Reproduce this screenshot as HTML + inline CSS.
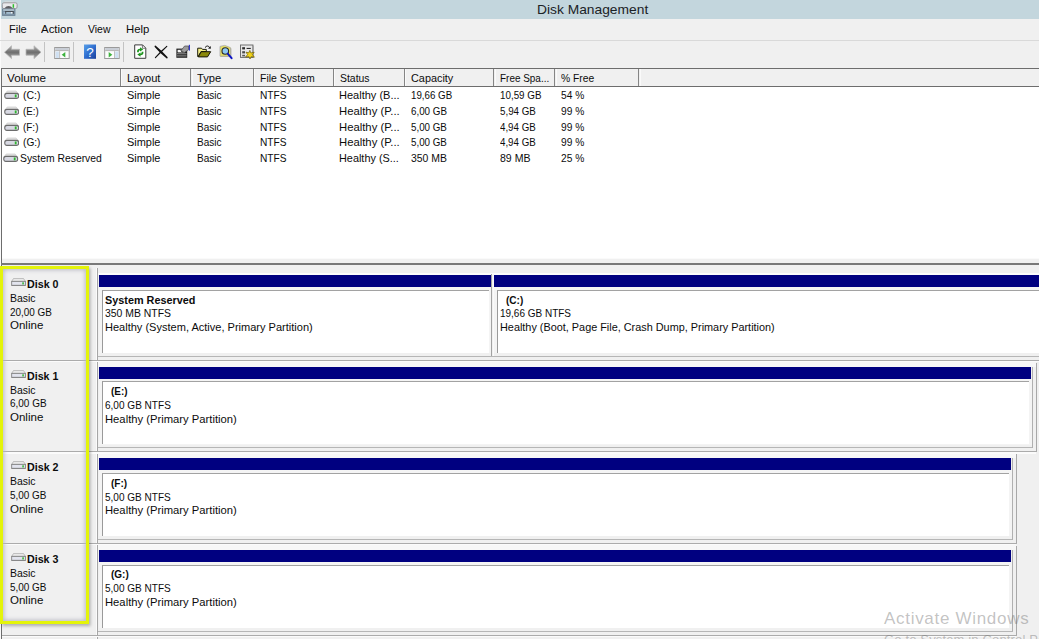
<!DOCTYPE html>
<html><head><meta charset="utf-8"><title>Disk Management</title>
<style>
html,body{margin:0;padding:0;}
body{width:1039px;height:639px;overflow:hidden;background:#f0f0f0;position:relative;font-family:"Liberation Sans","DejaVu Sans",sans-serif;font-size:11px;color:#0c0c0c;}
.a{position:absolute;}
#title{left:0;top:0;width:1039px;height:19px;background:#c3d6dd;}
#list{left:1px;top:68px;width:1038px;height:190px;background:#fff;border-left:1px solid #6d6d6d;border-top:1px solid #6d6d6d;box-sizing:border-box;}
#hdr{position:absolute;left:0;top:0;width:1038px;height:16.5px;background:#f0f0f0;border-bottom:1.2px solid #6d6d6d;}
.hc{position:absolute;top:0;height:16px;border-right:1px solid #8a8a8a;box-sizing:border-box;}
.t{position:absolute;white-space:nowrap;font-size:11.5px;line-height:12px;height:12px;transform-origin:0 0;}
.b{font-weight:bold;}
.bar{position:absolute;background:#000080;}
.w{position:absolute;background:#fff;}
.l{position:absolute;}
</style></head><body>
<div id="title" class="a"></div>
<div class="a" style="left:0;top:0;width:1px;height:19px;background:#f6f9fa"></div>
<div class="a" style="left:0;top:19px;width:1px;height:620px;background:#fafafa"></div>
<div class="a" style="left:0;top:40px;width:1039px;height:1px;background:#d9d9d9"></div>

<svg class="a" style="left:0;top:41px" width="270" height="27" viewBox="0 41 270 27"><defs><linearGradient id="ga" x1="0" y1="0" x2="0" y2="1"><stop offset="0" stop-color="#b4b4b4"/><stop offset=".5" stop-color="#6f6f6f"/><stop offset="1" stop-color="#a8a8a8"/></linearGradient><linearGradient id="gh" x1="0" y1="0" x2="1" y2="1"><stop offset="0" stop-color="#5aa0e8"/><stop offset=".5" stop-color="#2f6fd0"/><stop offset="1" stop-color="#1c3f9a"/></linearGradient></defs><path d="M4.5 52.2 L11.5 45.8 L11.5 49.3 L19.5 49.3 L19.5 55.2 L11.5 55.2 L11.5 58.6 Z" fill="url(#ga)" stroke="#b5b5b5" stroke-width=".8"/><path d="M41 52.2 L34 45.8 L34 49.3 L26 49.3 L26 55.2 L34 55.2 L34 58.6 Z" fill="url(#ga)" stroke="#b5b5b5" stroke-width=".8"/><rect x="44.0" y="42" width="1" height="20" fill="#c3c3c3"/><rect x="73.0" y="42" width="1" height="20" fill="#c3c3c3"/><rect x="123.0" y="42" width="1" height="20" fill="#c3c3c3"/><rect x="54.7" y="47.5" width="14.5" height="11" fill="#fdfdfd" stroke="#9a9a9a" stroke-width="1"/><rect x="55.2" y="48" width="13.5" height="2" fill="#c9ced6"/><rect x="55.2" y="50.2" width="13.5" height=".9" fill="#a8a8a8"/><rect x="55.7" y="51.5" width="3.2" height="6.5" fill="#cfe0f2"/><rect x="59.300000000000004" y="51.2" width=".8" height="7" fill="#b0b0b0"/><path d="M61.7 54.8 L65.3 52 L65.3 57.6 Z" fill="#3db33d"/><rect x="84" y="44.5" width="12" height="14.3" fill="url(#gh)"/><text x="90" y="56.6" font-family="Liberation Sans,sans-serif" font-weight="normal" font-size="13.5" fill="#fff" text-anchor="middle">?</text><rect x="104.7" y="47.5" width="14.5" height="11" fill="#fdfdfd" stroke="#9a9a9a" stroke-width="1"/><rect x="105.2" y="48" width="13.5" height="2" fill="#c9ced6"/><rect x="105.2" y="50.2" width="13.5" height=".9" fill="#a8a8a8"/><rect x="115.10000000000001" y="51.5" width="3.2" height="6.5" fill="#cfe0f2"/><rect x="114.0" y="51.2" width=".8" height="7" fill="#b0b0b0"/><path d="M112.3 54.8 L108.7 52 L108.7 57.6 Z" fill="#3db33d"/><path d="M134.7 44.9 L142.6 44.9 L145.8 48.1 L145.8 58.3 L134.7 58.3 Z" fill="#fff" stroke="#3c3c3c" stroke-width="1"/><path d="M142.4 45 L142.4 48.3 L145.7 48.3" fill="none" stroke="#555" stroke-width=".8"/><path d="M137.1 52.2 Q136.6 49 140 48.7 L140 47.2 L143.2 49.4 L140 51.6 L140 50.3 Q138.6 50.4 138.8 52.2 Z" fill="#1f951f"/><path d="M143.4 51.8 Q143.9 55 140.5 55.3 L140.5 56.8 L137.3 54.6 L140.5 52.4 L140.5 53.7 Q141.9 53.6 141.7 51.8 Z" fill="#1f951f"/><path d="M155.3 46.4 Q161 51 166.9 57.6 Q160.5 52.6 155.3 46.4 Z" fill="#111" stroke="#111" stroke-width="1.5" stroke-linejoin="round"/><path d="M166.8 46.4 Q161.5 51.5 155.4 57.6 Q161.5 50.6 166.8 46.4 Z" fill="#111" stroke="#111" stroke-width="1.1" stroke-linejoin="round"/><rect x="176.4" y="48.6" width="10.8" height="9.2" fill="#1c1c1c"/><rect x="177.6" y="49.8" width="7" height="2.6" fill="#f4f4f4"/><rect x="177" y="53.2" width="9.6" height="1" fill="#8c8c8c"/><rect x="177" y="54.8" width="9.6" height="1" fill="#7a7a7a"/><rect x="177" y="56.3" width="9.6" height=".9" fill="#666"/><path d="M181 50.6 L184.6 46 L188.6 46 L188.6 49.6 L184.6 52.6 Z" fill="#9c9c9c" stroke="#4a4a4a" stroke-width=".7"/><path d="M181 50.6 L182.6 52.4" stroke="#222" stroke-width="1"/><rect x="188.8" y="44.8" width="1.1" height="5.8" fill="#1a22c8"/><path d="M197.7 48.2 L201.5 48.2 L202.5 49.4 L206.3 49.4 L206.3 51.5 L201 51.5 L198.2 56.5 L197.7 56.5 Z" fill="#f4ee88" stroke="#1e1e0c" stroke-width="1"/><path d="M198.3 56.9 L201.2 51.7 L210.7 51.7 L207.5 56.9 Z" fill="#8a8808" stroke="#15150a" stroke-width="1"/><path d="M205 47.6 Q207.5 44.4 209.8 47.6" fill="none" stroke="#111" stroke-width="1"/><path d="M208 48.4 L210.8 48.8 L210.6 46" fill="#111"/><path d="M220.6 47.2 L225 46 L229.2 47.6 L231.4 48.6 L231.4 57 L220.6 57 Z" fill="#b4b4b4"/><path d="M220 46.4 L224.6 45.4 L228.6 46.8 L230.6 47.8 L230.6 56.2 L220 56.2 Z" fill="#e6df62" stroke="#a8a8a8" stroke-width=".8"/><circle cx="225.3" cy="51" r="3.3" fill="#8cc8f4" stroke="#2a2a2a" stroke-width="1.1"/><path d="M227.9 53.8 L231.6 58.2" stroke="#0c14c4" stroke-width="2" stroke-linecap="round"/><rect x="241" y="45.6" width="12.6" height="12.4" fill="#a8a8a8"/><rect x="240.5" y="45" width="12.4" height="12.4" fill="#e8e8e8" stroke="#6e6e6e" stroke-width="1"/><rect x="242.2" y="47.2" width="2.8" height="2.2" fill="#2a2a2a"/><rect x="246.6" y="47.9" width="4.2" height="1.1" fill="#2a2a2a"/><rect x="242.2" y="51.2" width="2.8" height="2.2" fill="#4a4a4a"/><rect x="242.2" y="54.8" width="2.8" height="1.6" fill="#5a5a5a"/><path d="M249.8 50.4 L250.9 53 L254.2 52.2 L252.4 54.6 L254.4 57.2 L251.2 56.6 L250 59 L248.9 56.6 L245.6 57 L247.6 54.6 L246 52.2 L248.8 52.8 Z" fill="#f2d41a" stroke="#6a5a00" stroke-width=".7"/></svg>
<svg class="a" style="left:1px;top:0px" width="18" height="17" viewBox="0 0 18 17"><path d="M4 1.6 L12.4 1.6 L15.6 3.4 L1.6 3.4 Z" fill="#dedede"/><rect x="1.3" y="2.8" width="14.8" height="5.8" rx="1.6" fill="#e9e9ec" stroke="#939397" stroke-width=".9"/><path d="M3.2 8.4 Q7.5 3.8 12 8.4 Z" fill="#5e5e62"/><rect x="11.6" y="4.2" width="1.5" height="3.6" fill="#2fc02f"/><rect x="1.4" y="9" width="12.6" height="6.4" fill="#7d93a6" stroke="#6a7f92" stroke-width=".8"/><rect x="2.2" y="9.4" width="11" height="1.2" fill="#c7d6de"/><rect x="4" y="11" width="8.6" height="1.1" fill="#4a4f55"/><rect x="2.6" y="12.1" width="9" height="1.6" fill="#a9c3d6"/><rect x="4.2" y="11.4" width="1" height="2.4" fill="#4a4f55"/><rect x="11.8" y="11.4" width="1" height="2.4" fill="#4a4f55"/><rect x="10" y="12" width="1.4" height="1.4" fill="#f4f4f4"/></svg>
<div id="list" class="a"><div id="hdr">
<div class="l" style="left:117.8px;top:0;width:1.2px;height:16.5px;background:#858585"></div><div class="l" style="left:119px;top:0;width:1px;height:16.5px;background:#fafafa"></div>
<div class="l" style="left:188.3px;top:0;width:1.2px;height:16.5px;background:#858585"></div><div class="l" style="left:189.5px;top:0;width:1px;height:16.5px;background:#fafafa"></div>
<div class="l" style="left:250.8px;top:0;width:1.2px;height:16.5px;background:#858585"></div><div class="l" style="left:252px;top:0;width:1px;height:16.5px;background:#fafafa"></div>
<div class="l" style="left:330.8px;top:0;width:1.2px;height:16.5px;background:#858585"></div><div class="l" style="left:332px;top:0;width:1px;height:16.5px;background:#fafafa"></div>
<div class="l" style="left:401.8px;top:0;width:1.2px;height:16.5px;background:#858585"></div><div class="l" style="left:403px;top:0;width:1px;height:16.5px;background:#fafafa"></div>
<div class="l" style="left:491.3px;top:0;width:1.2px;height:16.5px;background:#858585"></div><div class="l" style="left:492.5px;top:0;width:1px;height:16.5px;background:#fafafa"></div>
<div class="l" style="left:552.3px;top:0;width:1.2px;height:16.5px;background:#858585"></div><div class="l" style="left:553.5px;top:0;width:1px;height:16.5px;background:#fafafa"></div>
<div class="l" style="left:636.3px;top:0;width:1.2px;height:16.5px;background:#858585"></div><div class="l" style="left:637.5px;top:0;width:1px;height:16.5px;background:#fafafa"></div>
</div></div>
<svg class="a" style="left:3.5px;top:90.3px" width="15.4" height="9.2" viewBox="0 0 16 9.5"><path d="M3.4 1 L12.6 1 L15 3.8 L1 3.8 Z" fill="#e3e3e3" stroke="#c4c4c4" stroke-width=".6"/><rect x=".8" y="3.5" width="14.4" height="5.2" rx="2.2" ry="2.2" fill="#d8d9e3" stroke="#6c6c6c" stroke-width="1.15"/><rect x="11.2" y="4.6" width="1.9" height="3" fill="#2fb52f"/></svg>
<svg class="a" style="left:3.5px;top:106.3px" width="15.4" height="9.2" viewBox="0 0 16 9.5"><path d="M3.4 1 L12.6 1 L15 3.8 L1 3.8 Z" fill="#e3e3e3" stroke="#c4c4c4" stroke-width=".6"/><rect x=".8" y="3.5" width="14.4" height="5.2" rx="2.2" ry="2.2" fill="#d8d9e3" stroke="#6c6c6c" stroke-width="1.15"/><rect x="11.2" y="4.6" width="1.9" height="3" fill="#2fb52f"/></svg>
<svg class="a" style="left:3.5px;top:122.3px" width="15.4" height="9.2" viewBox="0 0 16 9.5"><path d="M3.4 1 L12.6 1 L15 3.8 L1 3.8 Z" fill="#e3e3e3" stroke="#c4c4c4" stroke-width=".6"/><rect x=".8" y="3.5" width="14.4" height="5.2" rx="2.2" ry="2.2" fill="#d8d9e3" stroke="#6c6c6c" stroke-width="1.15"/><rect x="11.2" y="4.6" width="1.9" height="3" fill="#2fb52f"/></svg>
<svg class="a" style="left:3.5px;top:137.3px" width="15.4" height="9.2" viewBox="0 0 16 9.5"><path d="M3.4 1 L12.6 1 L15 3.8 L1 3.8 Z" fill="#e3e3e3" stroke="#c4c4c4" stroke-width=".6"/><rect x=".8" y="3.5" width="14.4" height="5.2" rx="2.2" ry="2.2" fill="#d8d9e3" stroke="#6c6c6c" stroke-width="1.15"/><rect x="11.2" y="4.6" width="1.9" height="3" fill="#2fb52f"/></svg>
<svg class="a" style="left:3.2px;top:153.3px" width="15.4" height="9.2" viewBox="0 0 16 9.5"><path d="M3.4 1 L12.6 1 L15 3.8 L1 3.8 Z" fill="#e3e3e3" stroke="#c4c4c4" stroke-width=".6"/><rect x=".8" y="3.5" width="14.4" height="5.2" rx="2.2" ry="2.2" fill="#d8d9e3" stroke="#6c6c6c" stroke-width="1.15"/><rect x="11.2" y="4.6" width="1.9" height="3" fill="#2fb52f"/></svg>
<div class="l" style="left:1px;top:258px;width:1px;height:381px;background:#6d6d6d"></div>
<div class="l" style="left:1px;top:263.4px;width:1038px;height:1.3px;background:#787878"></div>
<div class="l" style="left:2px;top:258px;width:1037px;height:1px;background:#fafafa"></div>
<div class="l" style="left:95.6px;top:268px;width:1.2px;height:371px;background:#fbfbfb"></div>
<div class="l" style="left:96.8px;top:268px;width:1px;height:371px;background:#a6a6a6"></div>
<div class="l" style="left:97.5px;top:355.60px;width:949.0px;height:1px;background:#b6b6b6"></div>
<div class="l" style="left:2px;top:359.60px;width:1043.6px;height:1px;background:#ababab"></div>
<div class="l" style="left:2px;top:360.80px;width:1037px;height:1.3px;background:#fbfbfb"></div>
<div class="l" style="left:98px;top:273.40px;width:941px;height:1.8px;background:#fcfcfc"></div>
<div class="w" style="left:99px;top:287.00px;width:393px;height:66px;background:#f4f4f4"></div>
<div class="bar" style="left:99px;top:275.00px;width:392px;height:12.2px"></div>
<div class="w" style="left:102px;top:289.80px;width:386.5px;height:63px;border-left:1px solid #9a9a9a;border-top:1px solid #a2a2a2;box-sizing:border-box"></div>
<div class="w" style="left:494px;top:287.00px;width:552px;height:66px;background:#f4f4f4"></div>
<div class="bar" style="left:494px;top:275.00px;width:551px;height:12.2px"></div>
<div class="w" style="left:497px;top:289.80px;width:545.5px;height:63px;border-left:1px solid #9a9a9a;border-top:1px solid #a2a2a2;box-sizing:border-box"></div>
<div class="l" style="left:491.2px;top:274.00px;width:1.3px;height:82px;background:#a2a2a2"></div>
<div class="l" style="left:492.5px;top:274.00px;width:1.3px;height:82px;background:#fafafa"></div>
<div class="l" style="left:97.5px;top:447.25px;width:935.0px;height:1px;background:#b6b6b6"></div>
<div class="l" style="left:2px;top:451.25px;width:1034.6px;height:1px;background:#ababab"></div>
<div class="l" style="left:2px;top:452.45px;width:1034px;height:1.3px;background:#fbfbfb"></div>
<div class="l" style="left:98px;top:362.05px;width:938px;height:4.8px;background:#f7f7f7"></div>
<div class="l" style="left:1036px;top:362.65px;width:1px;height:89px;background:#a8a8a8"></div>
<div class="l" style="left:1032px;top:366.65px;width:1px;height:81.5px;background:#b0b0b0"></div>
<div class="w" style="left:99px;top:378.65px;width:933px;height:66px;background:#f4f4f4"></div>
<div class="bar" style="left:99px;top:366.65px;width:932px;height:12.2px"></div>
<div class="w" style="left:102px;top:381.45px;width:926.5px;height:63px;border-left:1px solid #9a9a9a;border-top:1px solid #a2a2a2;box-sizing:border-box"></div>
<div class="l" style="left:97.5px;top:538.90px;width:915.0px;height:1px;background:#b6b6b6"></div>
<div class="l" style="left:2px;top:542.90px;width:1014.6px;height:1px;background:#ababab"></div>
<div class="l" style="left:2px;top:544.10px;width:1014px;height:1.3px;background:#fbfbfb"></div>
<div class="l" style="left:98px;top:453.70px;width:918px;height:4.8px;background:#f7f7f7"></div>
<div class="l" style="left:1016px;top:454.30px;width:1px;height:89px;background:#a8a8a8"></div>
<div class="l" style="left:1012px;top:458.30px;width:1px;height:81.5px;background:#b0b0b0"></div>
<div class="w" style="left:99px;top:470.30px;width:913px;height:66px;background:#f4f4f4"></div>
<div class="bar" style="left:99px;top:458.30px;width:912px;height:12.2px"></div>
<div class="w" style="left:102px;top:473.10px;width:906.5px;height:63px;border-left:1px solid #9a9a9a;border-top:1px solid #a2a2a2;box-sizing:border-box"></div>
<div class="l" style="left:97.5px;top:630.55px;width:915.0px;height:1px;background:#b6b6b6"></div>
<div class="l" style="left:2px;top:634.55px;width:1014.6px;height:1px;background:#ababab"></div>
<div class="l" style="left:2px;top:635.75px;width:1014px;height:1.3px;background:#fbfbfb"></div>
<div class="l" style="left:98px;top:545.35px;width:918px;height:4.8px;background:#f7f7f7"></div>
<div class="l" style="left:1016px;top:545.95px;width:1px;height:89px;background:#a8a8a8"></div>
<div class="l" style="left:1012px;top:549.95px;width:1px;height:81.5px;background:#b0b0b0"></div>
<div class="w" style="left:99px;top:561.95px;width:913px;height:66px;background:#f4f4f4"></div>
<div class="bar" style="left:99px;top:549.95px;width:912px;height:12.2px"></div>
<div class="w" style="left:102px;top:564.75px;width:906.5px;height:63px;border-left:1px solid #9a9a9a;border-top:1px solid #a2a2a2;box-sizing:border-box"></div>
<svg class="a" style="left:10.7px;top:277.7px" width="15.2" height="8.4" viewBox="0 0 16 9"><path d="M2.6 .5 L13.2 .5 L15.3 3.6 L.6 3.6 Z" fill="#e8e8e8" stroke="#a4a4a4" stroke-width=".7"/><rect x=".6" y="3.6" width="14.7" height="4.2" fill="#e2e4ee" stroke="#7c7c7c" stroke-width=".9"/><rect x=".3" y="7.7" width="15.3" height=".8" fill="#808080"/><rect x="12" y="4.6" width="1.6" height="2.3" fill="#2fb52f"/></svg>
<svg class="a" style="left:10.7px;top:369.7px" width="15.2" height="8.4" viewBox="0 0 16 9"><path d="M2.6 .5 L13.2 .5 L15.3 3.6 L.6 3.6 Z" fill="#e8e8e8" stroke="#a4a4a4" stroke-width=".7"/><rect x=".6" y="3.6" width="14.7" height="4.2" fill="#e2e4ee" stroke="#7c7c7c" stroke-width=".9"/><rect x=".3" y="7.7" width="15.3" height=".8" fill="#808080"/><rect x="12" y="4.6" width="1.6" height="2.3" fill="#2fb52f"/></svg>
<svg class="a" style="left:10.7px;top:460.7px" width="15.2" height="8.4" viewBox="0 0 16 9"><path d="M2.6 .5 L13.2 .5 L15.3 3.6 L.6 3.6 Z" fill="#e8e8e8" stroke="#a4a4a4" stroke-width=".7"/><rect x=".6" y="3.6" width="14.7" height="4.2" fill="#e2e4ee" stroke="#7c7c7c" stroke-width=".9"/><rect x=".3" y="7.7" width="15.3" height=".8" fill="#808080"/><rect x="12" y="4.6" width="1.6" height="2.3" fill="#2fb52f"/></svg>
<svg class="a" style="left:10.7px;top:552.7px" width="15.2" height="8.4" viewBox="0 0 16 9"><path d="M2.6 .5 L13.2 .5 L15.3 3.6 L.6 3.6 Z" fill="#e8e8e8" stroke="#a4a4a4" stroke-width=".7"/><rect x=".6" y="3.6" width="14.7" height="4.2" fill="#e2e4ee" stroke="#7c7c7c" stroke-width=".9"/><rect x=".3" y="7.7" width="15.3" height=".8" fill="#808080"/><rect x="12" y="4.6" width="1.6" height="2.3" fill="#2fb52f"/></svg>
<div class="t" style="left:536.92px;top:2px;transform:scaleX(1.0224);font-size:13.5px;line-height:15px;height:15px;color:#1b2226">Disk Management</div>
<div class="t" style="left:8.64px;top:23px;transform:scaleX(0.9571)">File</div>
<div class="t" style="left:41.30px;top:23px;transform:scaleX(0.9963)">Action</div>
<div class="t" style="left:88.05px;top:23px;transform:scaleX(0.9104)">View</div>
<div class="t" style="left:125.81px;top:23px;transform:scaleX(0.9863)">Help</div>
<div class="t" style="left:6.95px;top:72px;transform:scaleX(1.0182)">Volume</div>
<div class="t" style="left:126.63px;top:72px;transform:scaleX(0.9678)">Layout</div>
<div class="t" style="left:197.26px;top:72px;transform:scaleX(0.9716)">Type</div>
<div class="t" style="left:259.68px;top:72px;transform:scaleX(0.9112)">File System</div>
<div class="t" style="left:339.55px;top:72px;transform:scaleX(0.9069)">Status</div>
<div class="t" style="left:410.73px;top:72px;transform:scaleX(0.9447)">Capacity</div>
<div class="t" style="left:499.72px;top:72px;transform:scaleX(0.8645)">Free Spa...</div>
<div class="t" style="left:560.89px;top:72px;transform:scaleX(0.8985)">% Free</div>
<div class="t" style="left:23.11px;top:89px;transform:scaleX(0.9140)">(C:)</div>
<div class="t" style="left:127.02px;top:89px;transform:scaleX(0.9515)">Simple</div>
<div class="t" style="left:196.71px;top:89px;transform:scaleX(0.8729)">Basic</div>
<div class="t" style="left:259.71px;top:89px;transform:scaleX(0.8827)">NTFS</div>
<div class="t" style="left:339.14px;top:89px;transform:scaleX(0.9580)">Healthy (B...</div>
<div class="t" style="left:410.53px;top:89px;transform:scaleX(0.8480)">19,66 GB</div>
<div class="t" style="left:499.77px;top:89px;transform:scaleX(0.8533)">10,59 GB</div>
<div class="t" style="left:560.85px;top:89px;transform:scaleX(0.8863)">54 %</div>
<div class="t" style="left:23.16px;top:105px;transform:scaleX(0.8428)">(E:)</div>
<div class="t" style="left:127.02px;top:105px;transform:scaleX(0.9515)">Simple</div>
<div class="t" style="left:196.71px;top:105px;transform:scaleX(0.8729)">Basic</div>
<div class="t" style="left:259.71px;top:105px;transform:scaleX(0.8827)">NTFS</div>
<div class="t" style="left:339.12px;top:105px;transform:scaleX(0.9817)">Healthy (P...</div>
<div class="t" style="left:410.78px;top:105px;transform:scaleX(0.8522)">6,00 GB</div>
<div class="t" style="left:500.12px;top:105px;transform:scaleX(0.8501)">5,94 GB</div>
<div class="t" style="left:560.81px;top:105px;transform:scaleX(0.8880)">99 %</div>
<div class="t" style="left:23.15px;top:121px;transform:scaleX(0.8637)">(F:)</div>
<div class="t" style="left:127.02px;top:121px;transform:scaleX(0.9515)">Simple</div>
<div class="t" style="left:196.71px;top:121px;transform:scaleX(0.8729)">Basic</div>
<div class="t" style="left:259.71px;top:121px;transform:scaleX(0.8827)">NTFS</div>
<div class="t" style="left:339.12px;top:121px;transform:scaleX(0.9817)">Healthy (P...</div>
<div class="t" style="left:410.87px;top:121px;transform:scaleX(0.8501)">5,00 GB</div>
<div class="t" style="left:500.29px;top:121px;transform:scaleX(0.8460)">4,94 GB</div>
<div class="t" style="left:560.81px;top:121px;transform:scaleX(0.8880)">99 %</div>
<div class="t" style="left:23.13px;top:136px;transform:scaleX(0.8822)">(G:)</div>
<div class="t" style="left:127.02px;top:136px;transform:scaleX(0.9515)">Simple</div>
<div class="t" style="left:196.71px;top:136px;transform:scaleX(0.8729)">Basic</div>
<div class="t" style="left:259.71px;top:136px;transform:scaleX(0.8827)">NTFS</div>
<div class="t" style="left:339.12px;top:136px;transform:scaleX(0.9817)">Healthy (P...</div>
<div class="t" style="left:410.87px;top:136px;transform:scaleX(0.8501)">5,00 GB</div>
<div class="t" style="left:500.29px;top:136px;transform:scaleX(0.8460)">4,94 GB</div>
<div class="t" style="left:560.81px;top:136px;transform:scaleX(0.8880)">99 %</div>
<div class="t" style="left:20.05px;top:152px;transform:scaleX(0.9017)">System Reserved</div>
<div class="t" style="left:127.02px;top:152px;transform:scaleX(0.9515)">Simple</div>
<div class="t" style="left:196.71px;top:152px;transform:scaleX(0.8729)">Basic</div>
<div class="t" style="left:259.71px;top:152px;transform:scaleX(0.8827)">NTFS</div>
<div class="t" style="left:339.15px;top:152px;transform:scaleX(0.9457)">Healthy (S...</div>
<div class="t" style="left:410.89px;top:152px;transform:scaleX(0.9053)">350 MB</div>
<div class="t" style="left:500.04px;top:152px;transform:scaleX(0.9171)">89 MB</div>
<div class="t" style="left:560.76px;top:152px;transform:scaleX(0.8898)">25 %</div>
<div class="t b" style="left:26.70px;top:278px;transform:scaleX(0.9300)">Disk 0</div>
<div class="t" style="left:9.78px;top:292px;transform:scaleX(0.9101)">Basic</div>
<div class="t" style="left:10.12px;top:306px;transform:scaleX(0.8637)">20,00 GB</div>
<div class="t" style="left:10.10px;top:319px;transform:scaleX(1.0017)">Online</div>
<div class="t b" style="left:26.71px;top:370px;transform:scaleX(0.9258)">Disk 1</div>
<div class="t" style="left:9.78px;top:384px;transform:scaleX(0.9101)">Basic</div>
<div class="t" style="left:10.12px;top:397px;transform:scaleX(0.8668)">6,00 GB</div>
<div class="t" style="left:10.10px;top:411px;transform:scaleX(1.0017)">Online</div>
<div class="t b" style="left:26.70px;top:461px;transform:scaleX(0.9300)">Disk 2</div>
<div class="t" style="left:9.78px;top:475px;transform:scaleX(0.9101)">Basic</div>
<div class="t" style="left:10.21px;top:489px;transform:scaleX(0.8647)">5,00 GB</div>
<div class="t" style="left:10.10px;top:503px;transform:scaleX(1.0017)">Online</div>
<div class="t b" style="left:26.70px;top:553px;transform:scaleX(0.9286)">Disk 3</div>
<div class="t" style="left:9.78px;top:567px;transform:scaleX(0.9101)">Basic</div>
<div class="t" style="left:10.21px;top:581px;transform:scaleX(0.8647)">5,00 GB</div>
<div class="t" style="left:10.10px;top:594px;transform:scaleX(1.0017)">Online</div>
<div class="t b" style="left:105.12px;top:294px;transform:scaleX(0.9434)">System Reserved</div>
<div class="t" style="left:105.04px;top:307px;transform:scaleX(0.9064)">350 MB NTFS</div>
<div class="t" style="left:104.54px;top:321px;transform:scaleX(0.9588)">Healthy (System, Active, Primary Partition)</div>
<div class="t b" style="left:505.52px;top:294px;transform:scaleX(0.8710)">(C:)</div>
<div class="t" style="left:500.16px;top:307px;transform:scaleX(0.8677)">19,66 GB NTFS</div>
<div class="t" style="left:500.05px;top:321px;transform:scaleX(0.9446)">Healthy (Boot, Page File, Crash Dump, Primary Partition)</div>
<div class="t b" style="left:110.93px;top:385px;transform:scaleX(0.8629)">(E:)</div>
<div class="t" style="left:104.92px;top:399px;transform:scaleX(0.8730)">6,00 GB NTFS</div>
<div class="t" style="left:104.52px;top:413px;transform:scaleX(0.9778)">Healthy (Primary Partition)</div>
<div class="t b" style="left:110.92px;top:477px;transform:scaleX(0.8719)">(F:)</div>
<div class="t" style="left:105.01px;top:491px;transform:scaleX(0.8718)">5,00 GB NTFS</div>
<div class="t" style="left:104.52px;top:504px;transform:scaleX(0.9778)">Healthy (Primary Partition)</div>
<div class="t b" style="left:110.92px;top:568px;transform:scaleX(0.8680)">(G:)</div>
<div class="t" style="left:105.01px;top:582px;transform:scaleX(0.8718)">5,00 GB NTFS</div>
<div class="t" style="left:104.52px;top:596px;transform:scaleX(0.9778)">Healthy (Primary Partition)</div>
<div class="a" style="left:0;top:266px;width:89.3px;height:358px;box-sizing:border-box;border:3.2px solid #e4f40a;box-shadow:inset 0 0 4px 1px #b9b9c2, 1.5px 2px 3px rgba(0,0,0,.28)"></div>
<div class="a" style="left:884px;top:608px;font-size:17px;letter-spacing:.7px;color:rgba(110,110,110,.42);white-space:nowrap;line-height:22px">Activate Windows</div>
<div class="a" style="left:884px;top:632px;font-size:13px;letter-spacing:.15px;color:rgba(110,110,110,.42);white-space:nowrap;line-height:16px">Go to System in Control Panel to activate Windows.</div>
</body></html>
